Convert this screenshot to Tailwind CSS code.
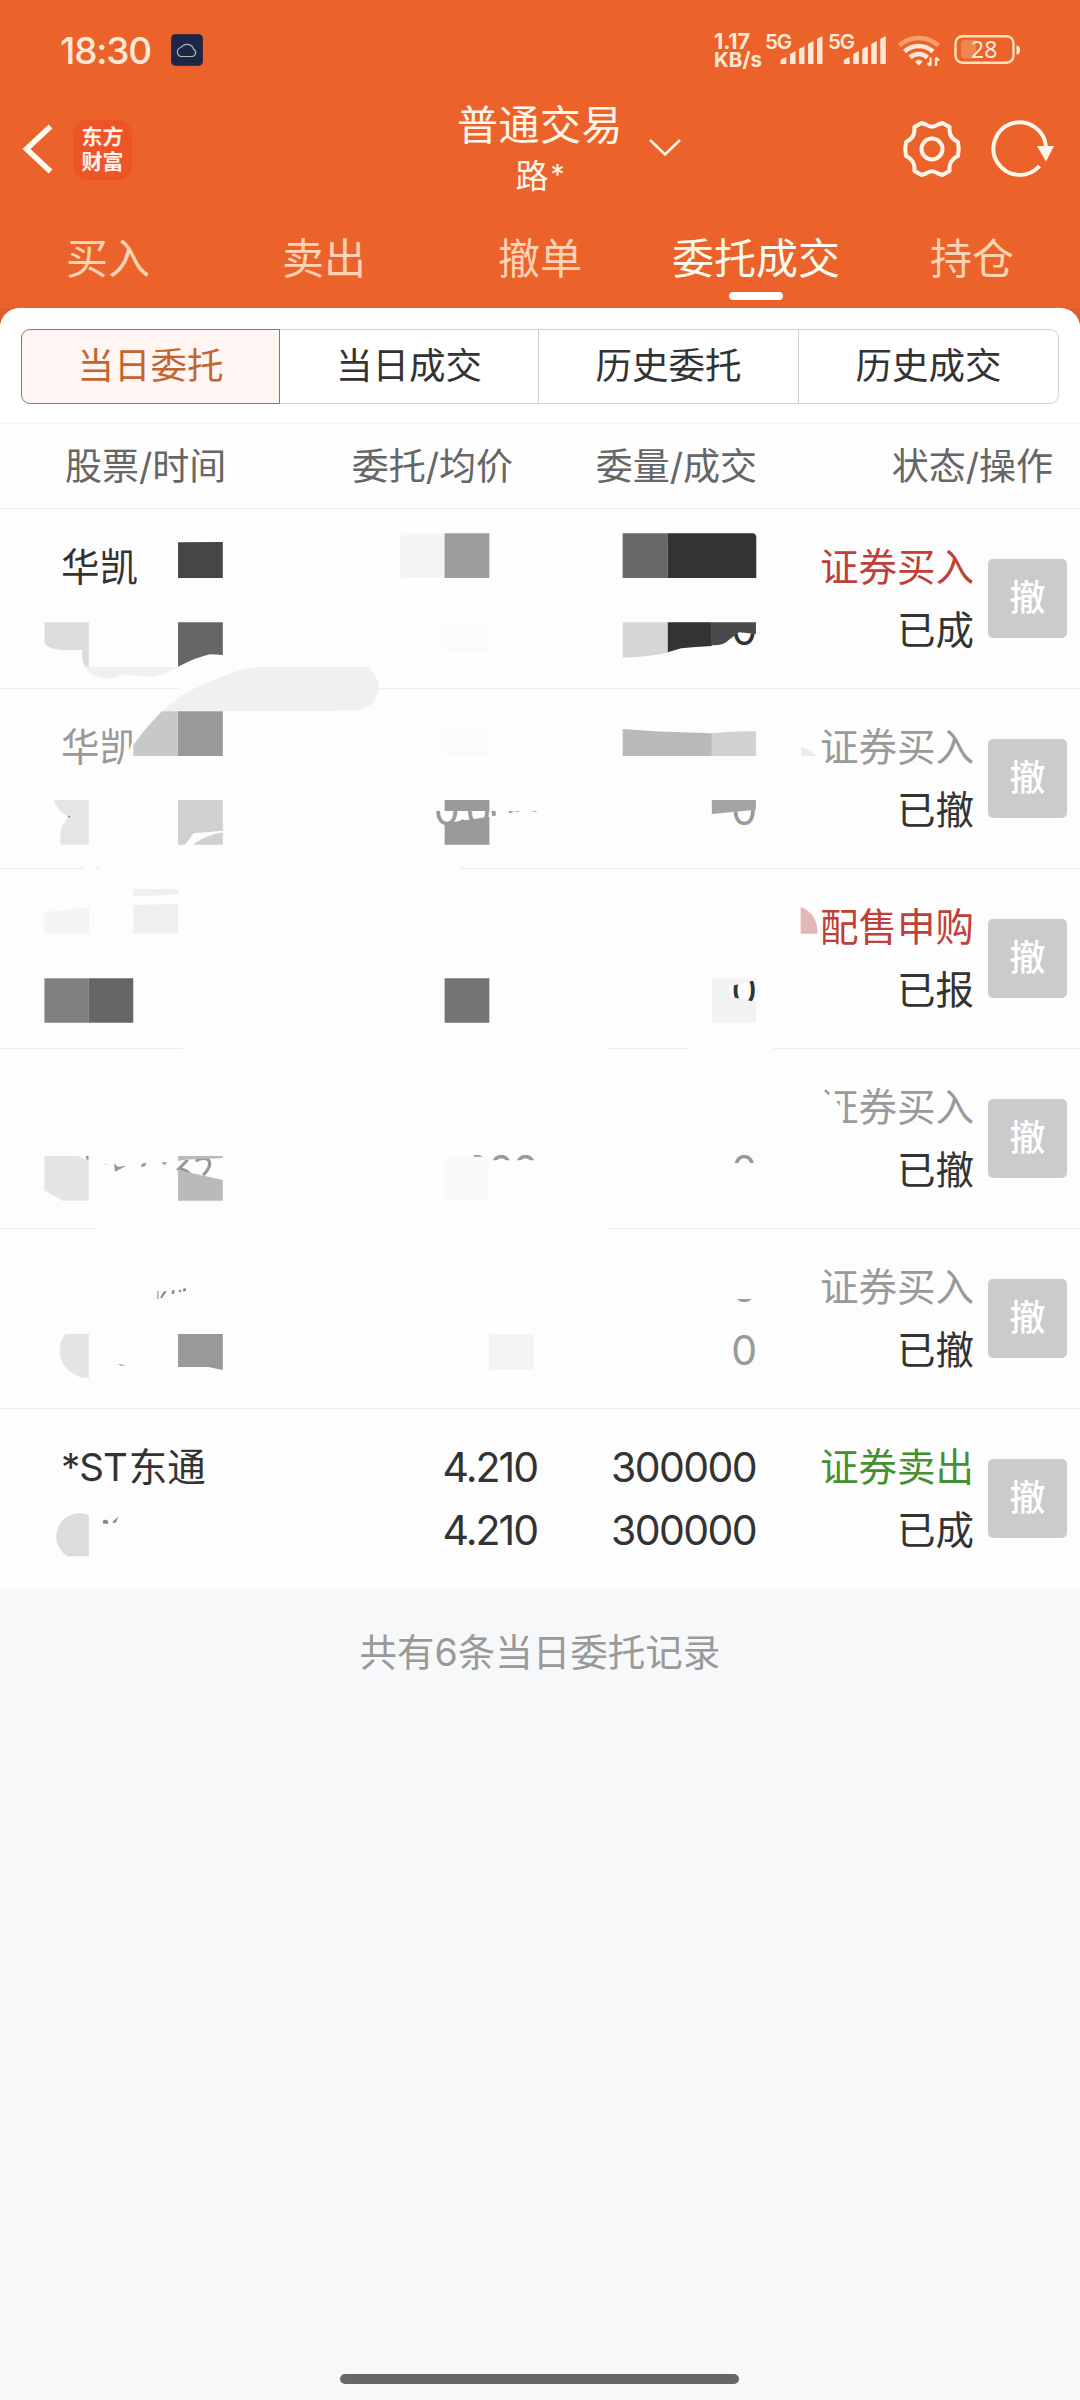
<!DOCTYPE html>
<html lang="zh-CN">
  <head>
    <meta charset="UTF-8" />
    <meta name="viewport" content="width=device-width, initial-scale=1.0" />
    <title>普通交易 - 委托成交</title>
    <script src="https://cdn.jsdelivr.net/npm/@tailwindcss/browser@4"></script>
  </head>
  <body
    class="w-[1080px] h-[2400px] flex flex-col overflow-hidden bg-[#f7f8fa] text-[#333] font-['Inter','Noto_Sans_CJK_SC',sans-serif]"
  >
    <header class="bg-[#eb632b] h-[308px] shrink-0 flex flex-col text-[#fff5e8]">
      <!-- Barre d'état -->
      <div class="h-[100px] flex items-center pl-[60px] text-[#ffe9d6]">
        <span class="w-[111px] text-[37px] leading-none font-medium tracking-[-1.2px]">18:30</span>
        <svg class="w-[32px] h-[32px]" viewBox="0 0 32 32" fill="none">
          <rect x="0.5" y="0.5" width="31" height="31" rx="4" fill="#1b2748" stroke="#46283a" />
          <path d="M11 22.5h10a4 4 0 0 0 1.5-7.5a7 7 0 0 0-12.500-1.500a4.500 4.500 0 0 0-3.500 5a4 4 0 0 0 4.500 4z" stroke="#b9b7a4" stroke-width="1.200" />
        </svg>
        <svg class="ml-[511px] w-[312px] h-[44px]" viewBox="714 28 312 44" fill="#ffe9d6">
          <g font-family="Inter" font-weight="700">
            <text x="714" y="48.500" font-size="21.500" textLength="36">1.17</text>
            <text x="714" y="66.500" font-size="20.500" textLength="48">KB/s</text>
            <text x="765" y="48.500" font-size="20.500" font-weight="600" textLength="27">5G</text>
            <text x="828" y="48.500" font-size="20.500" font-weight="600" textLength="27">5G</text>
          </g>
          <g id="bars">
            <path d="M780.500 64v-3.300q0-2 5.800-3.500v6.800zM790 64v-10l5.500-3v13zM799 64v-15l5.500-3v18zM808 64v-20l5.500-3v23zM817 64v-25l5.500-3v28z" />
          </g>
          <use href="#bars" x="63.300" />
          <g fill="none" stroke="#ffe9d6" stroke-width="4.500">
            <path d="M899 45.500a29.500 29.500 0 0 1 39.500 0" stroke="#f6a069" />
            <path d="M904.500 51.500a21 21 0 0 1 28.500 0" />
            <path d="M910 57.500a13 13 0 0 1 17.500 0" />
          </g>
          <path d="M915 61.500q4-3.500 7.600 0l-3.800 4.200z" />
          <path d="M930.500 57.500v8m-3-2.500l3 3m5.500 0v-8.500m3 3l-3-3" stroke="#ffe9d6" stroke-width="2.300" fill="none" />
          <path d="M961 44q0-4 4-4h11v18.500h-11q-4 0-4-4z" fill="#ef864b" />
          <rect x="955.500" y="36.200" width="58" height="26.500" rx="7" fill="none" stroke="#ffe0bd" stroke-width="2.400" />
          <path d="M1016.500 45.500q3.500 0 3.500 4.500t-3.500 4.500z" />
          <text x="971" y="58" font-size="23" font-family="Noto Sans">28</text>
        </svg>
      </div>

      <!-- Barre de titre -->
      <div class="h-[108px] flex items-center">
        <div class="w-[380px] h-[100px] flex items-center">
          <svg class="ml-[19px] w-[36px] h-[56px] mt-[-10px]" viewBox="20 121 36 56" fill="none" stroke="#fffaf2" stroke-width="5.500">
            <path d="M51.500 126.500L27.500 149L51.500 171.500" />
          </svg>
          <div class="ml-[18px] mt-[-9px] w-[59px] h-[60px] rounded-[14px] bg-[#ed5428] flex flex-col items-center justify-center pb-[3px] text-[21px] leading-[25px] font-bold font-['Noto_Sans_CJK_SC'] text-[#fff3ee]">
            <span>东方</span>
            <span>财富</span>
          </div>
        </div>
        <div class="w-[320px] flex flex-col items-center justify-center mt-[-5px] whitespace-nowrap">
          <span class="text-[41px] leading-[50px] tracking-[0.5px]">普通交易</span>
          <div class="relative text-[33px] leading-[52px]">路<span class="relative top-[-3px] ml-[2px] text-[28px]">*</span>
            <svg class="absolute left-[132px] top-[-13px] w-[36px] h-[22px]" viewBox="0 0 36 22" fill="none" stroke="#fff5e8" stroke-width="2.500">
              <path d="M3 3l15 14.500L33 3" />
            </svg>
          </div>
        </div>
        <svg class="ml-[196px] mt-[-10px] w-[164px] h-[64px]" viewBox="896 117 164 64" fill="none" stroke="#fff5e8" stroke-width="4">
          <path stroke-linejoin="round" d="M921.500 123L926 124.500Q932 129 938 124.500L942.500 123L949.500 127Q949 135 953 138.500Q955.500 141 958 142Q959.500 149 958 156Q955.500 157 953 159.500Q949 163 949.500 171L942.500 175L938 173.500Q932 169 926 173.500L921.500 175L914.500 171Q915 163 911 159.500Q908.500 157 906 156Q904.500 149 906 142Q908.500 141 911 138.500Q915 135 914.500 127Z" />
          <circle cx="932" cy="149" r="10.500" />
          <path d="M1046 147A26.300 26.300 0 1 0 1039.500 166" />
          <path d="M1037 146h17l-8 15.500z" fill="#fff5e8" stroke="none" />
        </svg>
      </div>

      <!-- Onglets -->
      <nav class="h-[100px] grid grid-cols-5 text-center text-[42px] leading-[101px] text-[#ffd2b4]">
        <a>买入</a>
        <a>卖出</a>
        <a>撤单</a>
        <a class="relative text-[#fffaf0]">委托成交
          <i class="absolute left-[81px] top-[84px] w-[54px] h-[8px] rounded-full bg-white"></i>
        </a>
        <a>持仓</a>
      </nav>
    </header>

    <main class="relative h-[1280px] shrink-0 bg-[#de602c]">
      <div class="h-full flex flex-col rounded-t-[20px] bg-[#fdfdfd]">
        <div class="h-[115px] rounded-t-[20px] bg-white pt-[21px] px-[21px]">
          <div class="h-[74px] grid grid-cols-[259px_259px_260px_260px] text-center text-[36.500px] leading-[73px]">
            <span class="border border-[#a0714a] rounded-l-[9px] bg-[#fff6f3] text-[#c4642f]">当日委托</span>
            <span class="border border-l-0 border-[#d0d2d2]">当日成交</span>
            <span class="border border-l-0 border-[#d0d2d2]">历史委托</span>
            <span class="border border-l-0 border-[#d0d2d2] rounded-r-[9px]">历史成交</span>
          </div>
        </div>

        <div class="h-[86px] border-y border-[#eeeeee] border-t-[#f6f6f6] flex text-[37px] leading-[85px] text-[#666] whitespace-nowrap">
          <span class="w-[286px] pl-[65px]">股票/时间</span>
          <span class="w-[227px] text-right">委托/均价</span>
          <span class="w-[244px] text-right">委量/成交</span>
          <span class="w-[296px] text-right">状态/操作</span>
        </div>

        <div class="text-[38.500px] leading-[62.500px] whitespace-nowrap">
          <div class="h-[180px] border-b border-[#ededed] flex pt-[27px]">
            <div class="w-[300px] pl-[61px]">华凯</div>
            <div class="w-[238px]"></div>
            <div class="w-[219px] text-right text-[41px]"><br />0</div>
            <div class="w-[217px] text-right"><p class="text-[#bf4038]">证券买入</p><p>已成</p></div>
            <div class="ml-[14px] mt-[23px] w-[79px] h-[79px] rounded-[5px] bg-[#cbcbcb] text-white text-[36px] leading-[79px] font-medium text-center">撤</div>
          </div>
          <div class="h-[180px] border-b border-[#ededed] flex pt-[27px]">
            <div class="w-[300px] pl-[61px] text-[#999]">华凯</div>
            <div class="w-[237px] text-right text-[41px] tracking-[-2px] text-[#999]"><br />0.000</div>
            <div class="w-[220px] text-right text-[41px] text-[#999]"><br />0</div>
            <div class="w-[217px] text-right"><p class="text-[#999]">证券买入</p><p>已撤</p></div>
            <div class="ml-[14px] mt-[23px] w-[79px] h-[79px] rounded-[5px] bg-[#cbcbcb] text-white text-[36px] leading-[79px] font-medium text-center">撤</div>
          </div>
          <div class="h-[180px] border-b border-[#ededed] flex pt-[27px]">
            <div class="w-[538px]"></div>
            <div class="w-[219px] text-right text-[41px]"><br />0</div>
            <div class="w-[217px] text-right"><p class="text-[#bf4038]">配售申购</p><p>已报</p></div>
            <div class="ml-[14px] mt-[23px] w-[79px] h-[79px] rounded-[5px] bg-[#cbcbcb] text-white text-[36px] leading-[79px] font-medium text-center">撤</div>
          </div>
          <div class="h-[180px] border-b border-[#ededed] flex pt-[27px]">
            <div class="w-[537px] text-right text-[41px] tracking-[-1.500px] text-[#999]"><br />000</div>
            <div class="w-[220px] text-right text-[41px] text-[#999]"><br />0</div>
            <div class="w-[217px] text-right"><p class="text-[#999]">证券买入</p><p>已撤</p></div>
            <div class="ml-[14px] mt-[23px] w-[79px] h-[79px] rounded-[5px] bg-[#cbcbcb] text-white text-[36px] leading-[79px] font-medium text-center">撤</div>
          </div>
          <div class="h-[180px] border-b border-[#ededed] flex pt-[27px]">
            <div class="w-[538px]"></div>
            <div class="w-[219px] text-right text-[41px] text-[#999]">0<br />0</div>
            <div class="w-[217px] text-right"><p class="text-[#999]">证券买入</p><p>已撤</p></div>
            <div class="ml-[14px] mt-[23px] w-[79px] h-[79px] rounded-[5px] bg-[#cbcbcb] text-white text-[36px] leading-[79px] font-medium text-center">撤</div>
          </div>
          <div class="h-[179px] flex pt-[27px]">
            <div class="w-[300px] pl-[61px]"><span class="tracking-[-1px] mr-[2px]">*ST</span>东通</div>
            <div class="w-[237px] text-right text-[41px] tracking-[-2px]">4.210<br />4.210</div>
            <div class="w-[219px] text-right text-[41px] tracking-[-1.600px]">300000<br />300000</div>
            <div class="w-[218px] text-right"><p class="text-[#459030]">证券卖出</p><p>已成</p></div>
            <div class="ml-[14px] mt-[23px] w-[79px] h-[79px] rounded-[5px] bg-[#cbcbcb] text-white text-[36px] leading-[79px] font-medium text-center">撤</div>
          </div>
        </div>
      </div>

      <!-- Masquage : mosaïque et coups de gomme par-dessus la liste -->
      <svg class="absolute left-0 top-0 w-[1080px] h-[1280px]" viewBox="0 308 1080 1280">
        <!-- lignes 1 et 2, moitié gauche -->
        <g transform="translate(0 510) scale(.34439 .33333)">
          <path d="M517 97L647 96V204H517z" fill="#464646" />
          <path d="M1162 80Q1180 71 1205 71H1291V204H1162z" fill="#f4f4f4" />
          <path d="M1291 70H1421V204H1291z" fill="#9d9d9d" />
          <path d="M129 337H258V471H248Q234 450 240 420H185Q145 420 129 400z" fill="#dcdcdc" />
          <path d="M248 471H517Q465 500 435 500Q405 500 362 492C340 500 325 506 308 506Q270 506 248 471z" fill="#f0f0f0" />
          <path d="M517 337H647V435Q625 433 610 433Q575 440 517 470z" fill="#666" />
          <path d="M1293 339H1419V428H1293z" fill="#fbfbfb" />
          <path d="M517 470Q575 440 610 433L745 471Q680 480 570 533L362 533V492Q465 500 517 470z" fill="none" />
          <path d="M382 700L450 625L520 535L565 530V620L400 790H372V726z" fill="#fdfdfd" />
          <path d="M470 604Q530 550 570 533Q680 480 745 471H1068Q1100 498 1100 535Q1095 590 1035 602z" fill="#f0f0f0" />
          <path d="M470 604H517V738H387V705Q430 645 470 604z" fill="#c8c8c8" />
          <path d="M517 604H647V738H517z" fill="#999" />
          <path d="M1293 656L1419 654V738H1293z" fill="#fbfbfb" />
          <path d="M155 870H258V1004H178Q165 960 200 920Q168 905 155 870z" fill="#e5e5e5" />
          <path d="M198 917l8 2-8 5z" fill="#888" />
          <path d="M517 870H647V962L562 970L537 1004H517zM560 1004Q605 970 647 968V1004z" fill="#d0d0d0" />
          <path d="M1240 840H1568V903H1240zM1421 920L1500 905H1568V970H1421z" fill="#fdfdfd" />
          <path d="M1291 870H1421V903H1291zM1291 940L1421 920V1004H1291z" fill="#999" />
          <path d="M245 1070H275V1080H245zM290 1070H1335V1080H290z" fill="#fdfdfd" />
        </g>
        <!-- lignes 1 et 2, moitié droite -->
        <g transform="translate(540 510) scale(.34439 .33333)">
          <path d="M560 300H640V370H560zM560 840H640V900H560z" fill="#fdfdfd" />
          <path d="M240 70H371V204H240z" fill="#686868" />
          <path d="M371 70H620Q628 73 628 82V204H371z" fill="#333" />
          <path d="M240 337H371V428Q320 440 240 443z" fill="#d6d6d6" />
          <path d="M371 337H499V408Q450 410 410 415L371 427z" fill="#333" />
          <path d="M499 337H627V372L578 367L548 390Q535 407 499 406z" fill="#4a4a4a" />
          <path d="M240 657Q320 664 371 665L499 670V738H240z" fill="#b9b9b9" />
          <path d="M499 670Q580 662 627 664V738H499z" fill="#d1d1d1" />
          <path d="M758 711Q785 720 802 738H758z" fill="#ececec" />
          <path d="M499 870H627V899L499 912z" fill="#a4a4a4" />
        </g>
        <!-- lignes 3 et 4, moitié gauche -->
        <g transform="translate(0 860) scale(.34439 .33333)">
          <path d="M129 157L258 141V221H129z" fill="#f4f4f4" />
          <path d="M387 87H517V102Q450 109 387 109zM387 135L517 132V221H387z" fill="#efefef" />
          <path d="M129 355H258V488H129z" fill="#808080" />
          <path d="M258 355H387V488H258z" fill="#666" />
          <path d="M1291 355H1421V488H1291z" fill="#757575" />
          <path d="M530 560H1568V572H530zM285 1100H1568V1110H285z" fill="#fdfdfd" />
          <path d="M1330 870H1375V1000H1330zM1375 891H1430V1000H1375zM1421 901H1568V1000H1421z" fill="#fdfdfd" />
          <path d="M1293 890H1421V1022H1293z" fill="#fafafa" />
          <path d="M129 888H225L258 902V1022H182L129 991z" fill="#e4e4e4" />
          <path d="M249 888l8 0v14l-7-6zM302 911l8 2v2zM331 910l11 10 25-2-33 17zM412 911l14-3-5 11-12 2zM469 907l16 0-7 9z" fill="#999" />
          <g fill="none" stroke="#999" stroke-width="9">
            <path d="M545 899L520 926Q540 928 551 941" />
            <path d="M568 903Q590 890 605 900Q618 915 590 946" />
          </g>
          <path d="M517 888H647V894Q600 897 560 898Q535 899 517 903zM517 930L647 960V1022H517z" fill="#bababa" />
        </g>
        <!-- lignes 3 et 4, moitié droite -->
        <g transform="translate(540 860) scale(.34439 .33333)">
          <path d="M540 330H640V362H540zM540 909H650V1000H540z" fill="#fdfdfd" />
          <path fill-rule="evenodd" d="M499 355H627V488H499zM547 380L627 360V426L553 410z" fill="#f2f2f2" />
          <path d="M627 340h8v22h-8zM627 426h8v30h-8z" fill="#fdfdfd" />
          <path d="M757 141Q806 160 806 221H757z" fill="#e5b7b4" />
          <path d="M800 690L822 692L843 712L865 730L880 750V800H800z M845 690L852 700V722L838 706z" fill="#fdfdfd" />
          <path d="M0 560H195V572H0zM430 560H677V572H430zM0 1100H195V1110H0z" fill="#fdfdfd" />
        </g>
        <!-- ligne 5, quantité effacée sauf le bas du chiffre -->
        <path d="M725 1266H765V1299H725z" fill="#fdfdfd" />
        <!-- lignes 5 et 6 -->
        <g transform="translate(0 1220) scale(.34439 .33333)">
          <path d="M457 213h3v25h-3zM465 233l10-18 10-3-15 23zM499 212l9-2-3 12-6 1zM518 211l8-2v7h-6zM531 207l9-3v8l-7 3zM343 432l22 4-14 1zM298 903q8-7 16 0v8h-14zM329 903l15-13-7 17-10 3z" fill="#888" />
          <path d="M190 342H258V473H238Q174 450 174 392Q174 362 190 342z" fill="#e4e4e4" />
          <path d="M517 342H647V450L605 441H517z" fill="#999" />
          <path d="M1421 342H1551V450H1421z" fill="#f3f3f3" />
          <path d="M230 879Q246 879 258 886V1009H195Q163 985 163 948Q170 885 230 879z" fill="#dcdcdc" />
        </g>
      </svg>
    </main>

    <p class="mt-[35px] text-center text-[37.500px] leading-[60px] text-[#999]">共有6条当日委托记录</p>

    <div class="mt-auto mb-[16px] ml-[340px] w-[399px] h-[10px] rounded-full bg-[#666867]"></div>
  </body>
</html>
